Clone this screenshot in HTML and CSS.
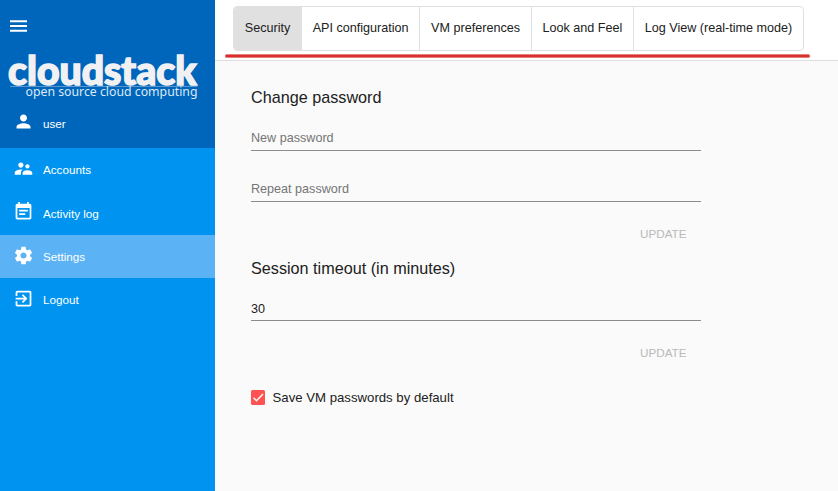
FILE: index.html
```html
<!DOCTYPE html>
<html lang="en">
<head>
<meta charset="utf-8">
<title>CloudStack settings</title>
<link rel="stylesheet" href="styles.css">
</head>
<body>
<div class="app">
  <aside class="sidebar">
    <header class="brand">
      <svg class="menu" viewBox="3 6 18 12"><path d="M3 18h18v-2H3v2zm0-5h18v-2H3v2zm0-7v2h18V6H3z"/></svg>
      <svg class="logo" viewBox="0 0 200 56">
        <text class="logo-name" x="8" y="34.800" textLength="188.500" lengthAdjust="spacingAndGlyphs">cloudstack</text>
        <path class="logo-rule" d="M10 36.500h187"/>
        <text class="logo-tag" x="25.500" y="46" textLength="172" lengthAdjust="spacingAndGlyphs">open source cloud computing</text>
      </svg>
      <div class="item user">
        <svg class="icon" viewBox="0 0 24 24"><path d="M12 12c2.210 0 4-1.790 4-4s-1.790-4-4-4-4 1.790-4 4 1.790 4 4 4zm0 2c-2.670 0-8 1.340-8 4v2h16v-2c0-2.660-5.330-4-8-4z"/></svg>
        <span>user</span>
      </div>
    </header>
    <nav>
      <a class="item"><svg class="icon" viewBox="0 0 24 24"><path d="M16.500 12c1.380 0 2.490-1.120 2.490-2.500S17.880 7 16.500 7 14 8.120 14 9.500s1.120 2.500 2.500 2.500zM9 11c1.660 0 2.990-1.340 2.990-3S10.660 5 9 5 6 6.340 6 8s1.340 3 3 3zm7.500 3c-1.830 0-5.500.920-5.500 2.750V19h11v-2.250c0-1.830-3.670-2.750-5.500-2.750zM9 13c-2.330 0-7 1.170-7 3.500V19h7v-2.250c0-.850.330-2.340 2.370-3.470C10.500 13.100 9.660 13 9 13z"/></svg><span>Accounts</span></a>
      <a class="item log"><svg class="icon" viewBox="0 0 24 24"><path d="M17 10H7v2h10v-2zm2-7h-1V1h-2v2H8V1H6v2H5c-1.110 0-1.990.9-1.990 2L3 19c0 1.100.89 2 2 2h14c1.100 0 2-.9 2-2V5c0-1.100-.9-2-2-2zm0 16H5V8h14v11zm-5-5H7v2h7v-2z"/></svg><span>Activity log</span></a>
      <a class="item active"><svg class="icon" viewBox="0 0 24 24"><path d="M19.430 12.980c.04-.32.07-.64.07-.98s-.03-.66-.07-.98l2.110-1.650c.19-.15.24-.42.12-.64l-2-3.460c-.12-.22-.39-.3-.61-.22l-2.490 1c-.52-.4-1.080-.73-1.690-.98l-.38-2.650C14.460 2.180 14.250 2 14 2h-4c-.25 0-.46.18-.49.42l-.38 2.650c-.61.25-1.170.59-1.690.98l-2.490-1c-.23-.09-.49 0-.61.22l-2 3.460c-.13.22-.07.49.12.64l2.110 1.650c-.04.32-.07.65-.07.98s.03.66.07.98l-2.110 1.650c-.19.15-.24.42-.12.64l2 3.460c.12.22.39.3.61.22l2.490-1c.52.4 1.080.73 1.690.98l.38 2.650c.03.24.24.42.49.42h4c.25 0 .46-.18.49-.42l.38-2.650c.61-.25 1.170-.59 1.690-.98l2.490 1c.23.09.49 0 .61-.22l2-3.460c.12-.22.07-.49-.12-.64l-2.110-1.650zM12 15.500c-1.930 0-3.500-1.570-3.500-3.500s1.570-3.500 3.500-3.500 3.500 1.570 3.500 3.500-1.570 3.500-3.500 3.500z"/></svg><span>Settings</span></a>
      <a class="item"><svg class="icon" viewBox="0 0 24 24"><path d="M10.090 15.590L11.500 17l5-5-5-5-1.410 1.410L12.670 11H3v2h9.670l-2.580 2.590zM19 3H5c-1.110 0-2 .9-2 2v4h2V5h14v14H5v-4H3v4c0 1.100.89 2 2 2h14c1.100 0 2-.9 2-2V5c0-1.100-.9-2-2-2z"/></svg><span>Logout</span></a>
    </nav>
  </aside>
  <main class="content">
    <div class="toolbar">
      <div class="tabs">
        <div class="tab selected">Security</div>
        <div class="tab">API configuration</div>
        <div class="tab">VM preferences</div>
        <div class="tab">Look and Feel</div>
        <div class="tab">Log View (real-time mode)</div>
      </div>
      <div class="marker"></div>
    </div>
    <div class="form">
      <h2>Change password</h2>
      <div class="field placeholder">New password</div>
      <div class="field placeholder repeat">Repeat password</div>
      <div class="update">UPDATE</div>
      <h2 class="session">Session timeout (in minutes)</h2>
      <div class="field">30</div>
      <div class="update">UPDATE</div>
      <div class="check">
        <svg class="box" viewBox="0 0 14 15"><rect width="14" height="15" rx="1.500"/><path d="M2.500 7.700l3 3L12 4"/></svg>
        <span>Save VM passwords by default</span>
      </div>
    </div>
  </main>
</div>
</body>
</html>
```
FILE: styles.css
```css
* { box-sizing: border-box; }
body { margin: 0; font-family: "Liberation Sans", Arial, sans-serif; color: #212121; }
.app { display: flex; height: 491px; overflow: hidden; background: #fafafa; }
.sidebar { width: 215px; flex: none; background: #0094f0; color: #fff; }
.brand { display: flex; flex-direction: column; height: 148px; background: #0066bb; }
.menu { width: 17px; height: 12px; margin: 20px 0 0 10px; fill: #fff; flex: none; }
.logo { width: 200px; height: 56px; margin-top: 18px; flex: none; overflow: visible; }
.logo-name { font: 900 39px Lato, sans-serif; fill: #f1f1f3; stroke: #f1f1f3; stroke-width: 1.500px; }
.logo-tag { font: 12.500px "Noto Sans", sans-serif; fill: #dce9f5; }
.logo-rule { stroke: #5b97cc; stroke-width: 1px; }
.item { display: flex; align-items: center; height: 43.300px; padding-left: 12.700px; font-size: 11.700px; }
.item span { margin-left: 9.300px; }
.user { height: 36px; }
.user span { margin-top: -1px; }
.icon { width: 21px; height: 21px; fill: #fff; margin-top: -3px; flex: none; }
.user .icon { margin-top: -5px; }
.log { height: 43.700px; }
.active { background: #5bb2f4; }
.content { flex: 1; min-width: 0; }
.toolbar { height: 61px; padding: 6px 0 0 18px; background: #fff; border-bottom: 1px solid #ddd; }
.tabs { display: flex; width: 571px; height: 45px; border: 1px solid #e0e0e0; border-radius: 4px; overflow: hidden; }
.tab { flex: 1 1 auto; display: flex; align-items: center; justify-content: center; font-size: 12.600px; white-space: nowrap; border-left: 1px solid #e0e0e0; padding-bottom: 1px; }
.tab:first-child { border-left: 0; }
.selected { background: #e0e0e0; }
.marker { width: 585px; height: 4px; margin: 3px 0 0 -8px; border-radius: 2px; background: #d92e2e; border: solid #e98080; border-width: 1px 0; }
.form { width: 486px; padding: 26px 0 0 36px; }
h2 { margin: 0; font-size: 16.200px; line-height: 20px; font-weight: 400; }
.field { height: 29px; margin-top: 15px; padding-top: 8px; border-bottom: 1px solid #8c8c8c; font-size: 12.600px; line-height: 15px; }
h2.session + .field { margin-top: 23px; padding-top: 1px; height: 20px; }
h2:first-child + .field { height: 20px; margin-top: 24px; padding-top: 0; }
.placeholder { color: #757575; }
.field.repeat { height: 31px; margin-top: 20px; padding-top: 11px; }
.update { height: 18px; margin: 23px 14.500px 0 0; text-align: right; font-size: 11.700px; line-height: 18px; color: #b9b9b9; }
.session { margin-top: 15px; }
.check { display: flex; align-items: center; height: 18px; margin-top: 26px; font-size: 13.200px; }
.check span { margin-left: 7.500px; }
.box { width: 14px; height: 15px; fill: #ff5252; }
.box path { fill: none; stroke: #fafafa; stroke-width: 1.500px; }
```
